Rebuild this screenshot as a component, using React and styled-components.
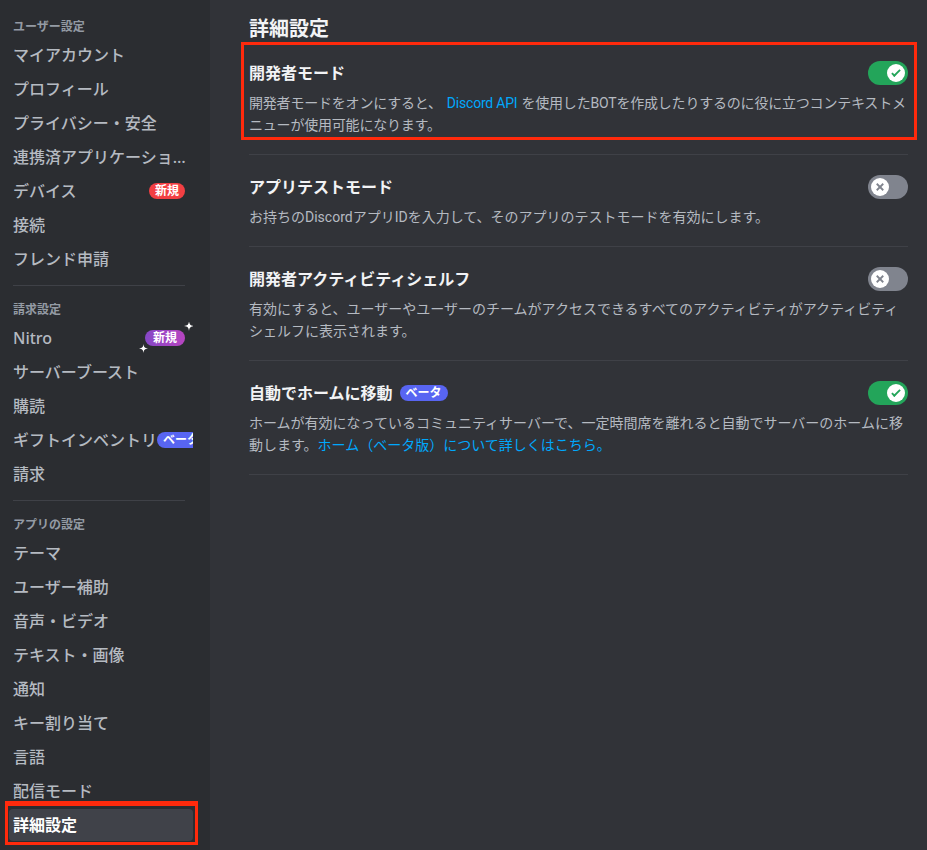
import React from "react";
import styled, { createGlobalStyle } from "styled-components";

const GlobalStyle = createGlobalStyle`
  html, body {
    margin: 0;
    padding: 0;
    background: #313338;
  }
  body {
    font-family: "Noto Sans", "Noto Sans CJK JP", sans-serif;
    -webkit-font-smoothing: antialiased;
  }
`;

const Layout = styled.div`
  display: flex;
  width: 927px;
  height: 850px;
  overflow: hidden;
`;

const Sidebar = styled.nav`
  width: 210px;
  flex-shrink: 0;
  background: #2b2d31;
  padding-top: 11px;
  box-sizing: border-box;
`;

const SectionHeader = styled.div`
  padding: 8px 4px 4px;
  margin-left: 9px;
  font-size: 12px;
  line-height: 16px;
  font-weight: 700;
  color: #949ba4;
`;

const Separator = styled.div`
  height: 1px;
  margin: 10px 25px 8px 13px;
  background: #3f4147;
`;

const Item = styled.div`
  position: relative;
  display: flex;
  align-items: center;
  width: 184px;
  height: 32px;
  margin: 0 0 2px 9px;
  padding: 0 6px 0 4px;
  box-sizing: border-box;
  border-radius: 4px;
  font-size: 16px;
  line-height: 20px;
  font-weight: ${(p) => (p.$active ? 600 : 500)};
  color: ${(p) => (p.$active ? "#ffffff" : "#b5bac1")};
  background: ${(p) => (p.$active ? "#404249" : "transparent")};
  overflow: ${(p) => (p.$active ? "visible" : "hidden")};
`;

const ItemLabel = styled.span`
  flex: ${(p) => (p.$keep ? "0 0 auto" : "0 1 auto")};
  min-width: 0;
  white-space: nowrap;
  overflow: hidden;
  text-overflow: ellipsis;
`;

const Badge = styled.span`
  position: relative;
  flex-shrink: 0;
  margin-left: ${(p) => (p.$inline ? "0" : "auto")};
  margin-right: ${(p) => (p.$inline ? "0" : "2px")};
  height: 16px;
  padding: 0 ${(p) => p.$pad || 6}px;
  border-radius: 8px;
  font-size: 12px;
  line-height: 16px;
  font-weight: 700;
  color: #ffffff;
  background: ${(p) => p.$bg};
`;

const Sparkle = styled.svg`
  position: absolute;
  fill: #ffffff;
`;

const Annotation = styled.div`
  position: absolute;
  top: ${(p) => p.$top}px;
  bottom: ${(p) => p.$bottom}px;
  left: ${(p) => p.$left}px;
  right: ${(p) => p.$right}px;
  border: 3px solid #ff2a0c;
  border-top-width: ${(p) => p.$topWidth || 3}px;
  pointer-events: none;
`;

const Main = styled.main`
  flex: 1;
  padding: 17px 19px 0 39px;
  background: #313338;
`;

const Heading = styled.h2`
  margin: 0;
  font-size: 20px;
  line-height: 24px;
  font-weight: 700;
  color: #f2f3f5;
`;

const Row = styled.section`
  position: relative;
  padding: 20px 0 18px;
  border-bottom: 1px solid #3f4147;
`;

const TitleRow = styled.div`
  display: flex;
  align-items: center;
  height: 24px;
`;

const Title = styled.div`
  flex: 1;
  display: flex;
  align-items: center;
  gap: 7px;
  font-size: 16px;
  line-height: 20px;
  font-weight: 600;
  color: #f2f3f5;
`;

const Description = styled.p`
  margin: 7px 0 0;
  font-family: "Roboto", "Noto Sans CJK JP", sans-serif;
  font-size: 14px;
  line-height: 22px;
  font-weight: 400;
  color: #b5bac1;
  letter-spacing: ${(p) => (p.$tight ? "-0.2px" : "0")};
`;

const Link = styled.a`
  color: #00a8fc;
  text-decoration: none;
  margin: ${(p) => (p.$spaced ? "0 4px 0 5px" : "0")};
`;

const Track = styled.div`
  position: relative;
  width: 40px;
  height: 24px;
  flex-shrink: 0;
  border-radius: 12px;
  background: ${(p) => (p.$on ? "#23a55a" : "#80848e")};
`;

const Knob = styled.div`
  position: absolute;
  top: 3px;
  left: ${(p) => (p.$on ? 19 : 3)}px;
  width: 18px;
  height: 18px;
  border-radius: 50%;
  background: #ffffff;
  display: flex;
  align-items: center;
  justify-content: center;
`;

const Toggle = ({ on }) => (
  <Track $on={on}>
    <Knob $on={on}>
      <svg width="16" height="16" viewBox="0 0 20 20" fill={on ? "#23a55a" : "#80848e"}>
        {on ? (
          <>
            <path d="M7.89561 14.8538L6.30462 13.2629L14.3099 5.25755L15.9009 6.84854L7.89561 14.8538Z" />
            <path d="M4.08643 11.0903L5.67742 9.49929L9.4485 13.2704L7.85751 14.8614L4.08643 11.0903Z" />
          </>
        ) : (
          <>
            <path d="M5.13231 6.72963L6.7233 5.13864L14.855 13.2704L13.264 14.8614L5.13231 6.72963Z" />
            <path d="M13.2704 5.13864L14.8614 6.72963L6.72963 14.8614L5.13864 13.2704L13.2704 5.13864Z" />
          </>
        )}
      </svg>
    </Knob>
  </Track>
);

const star = "M5 0 C5.4 3.6 6.4 4.6 10 5 C6.4 5.4 5.4 6.4 5 10 C4.6 6.4 3.6 5.4 0 5 C3.6 4.6 4.6 3.6 5 0Z";

const sections = [
  {
    title: "ユーザー設定",
    items: [
      { label: "マイアカウント" },
      { label: "プロフィール" },
      { label: "プライバシー・安全" },
      { label: "連携済アプリケーション" },
      { label: "デバイス", badge: "new" },
      { label: "接続" },
      { label: "フレンド申請" },
    ],
  },
  {
    title: "請求設定",
    items: [
      { label: "Nitro", badge: "nitro" },
      { label: "サーバーブースト" },
      { label: "購読" },
      { label: "ギフトインベントリ", badge: "beta" },
      { label: "請求" },
    ],
  },
  {
    title: "アプリの設定",
    items: [
      { label: "テーマ" },
      { label: "ユーザー補助" },
      { label: "音声・ビデオ" },
      { label: "テキスト・画像" },
      { label: "通知" },
      { label: "キー割り当て" },
      { label: "言語" },
      { label: "配信モード" },
      { label: "詳細設定", active: true },
    ],
  },
];

const renderBadge = (kind) => {
  if (kind === "new") return <Badge $bg="#f23f43">新規</Badge>;
  if (kind === "beta")
    return (
      <Badge $inline $bg="#5865f2">
        ベータ
      </Badge>
    );
  if (kind === "nitro")
    return (
      <Badge $pad={8} $bg="linear-gradient(90deg, #8547c6 0%, #b845c1 100%)">
        新規
        <Sparkle width="10" height="10" viewBox="0 0 10 10" style={{ top: -9, right: -9 }}>
          <path d={star} />
        </Sparkle>
        <Sparkle width="9" height="9" viewBox="0 0 10 10" style={{ bottom: -7, left: -6 }}>
          <path d={star} />
        </Sparkle>
      </Badge>
    );
  return null;
};

const settings = [
  {
    title: "開発者モード",
    on: true,
    highlight: true,
    desc: (
      <>
        開発者モードをオンにすると、
        <Link $spaced>Discord API</Link>
        を使用したBOTを作成したりするのに役に立つコンテキストメニューが使用可能になります。
      </>
    ),
  },
  {
    title: "アプリテストモード",
    on: false,
    desc: "お持ちのDiscordアプリIDを入力して、そのアプリのテストモードを有効にします。",
  },
  {
    title: "開発者アクティビティシェルフ",
    on: false,
    desc: "有効にすると、ユーザーやユーザーのチームがアクセスできるすべてのアクティビティがアクティビティシェルフに表示されます。",
  },
  {
    title: "自動でホームに移動",
    beta: true,
    on: true,
    desc: (
      <>
        ホームが有効になっているコミュニティサーバーで、一定時間席を離れると自動でサーバーのホームに移動します。
        <Link>ホーム（ベータ版）について詳しくはこちら。</Link>
      </>
    ),
  },
];

export default function App() {
  return (
    <Layout>
      <GlobalStyle />
      <Sidebar>
        {sections.map((section, i) => (
          <React.Fragment key={section.title}>
            {i > 0 && <Separator />}
            <SectionHeader>{section.title}</SectionHeader>
            {section.items.map((item) => (
              <Item key={item.label} $active={item.active}>
                <ItemLabel $keep={item.badge === "beta"}>{item.label}</ItemLabel>
                {renderBadge(item.badge)}
                {item.active && (
                  <Annotation $top={-8} $bottom={-4} $left={-4} $right={-5} $topWidth={5} />
                )}
              </Item>
            ))}
          </React.Fragment>
        ))}
      </Sidebar>
      <Main>
        <Heading>詳細設定</Heading>
        {settings.map((s) => (
          <Row key={s.title}>
            <TitleRow>
              <Title>
                {s.title}
                {s.beta && (
                  <Badge $inline $bg="#5865f2">
                    ベータ
                  </Badge>
                )}
              </Title>
              <Toggle on={s.on} />
            </TitleRow>
            <Description $tight={s.highlight}>{s.desc}</Description>
            {s.highlight && <Annotation $top={1} $bottom={14} $left={-8} $right={-9} />}
          </Row>
        ))}
      </Main>
    </Layout>
  );
}
